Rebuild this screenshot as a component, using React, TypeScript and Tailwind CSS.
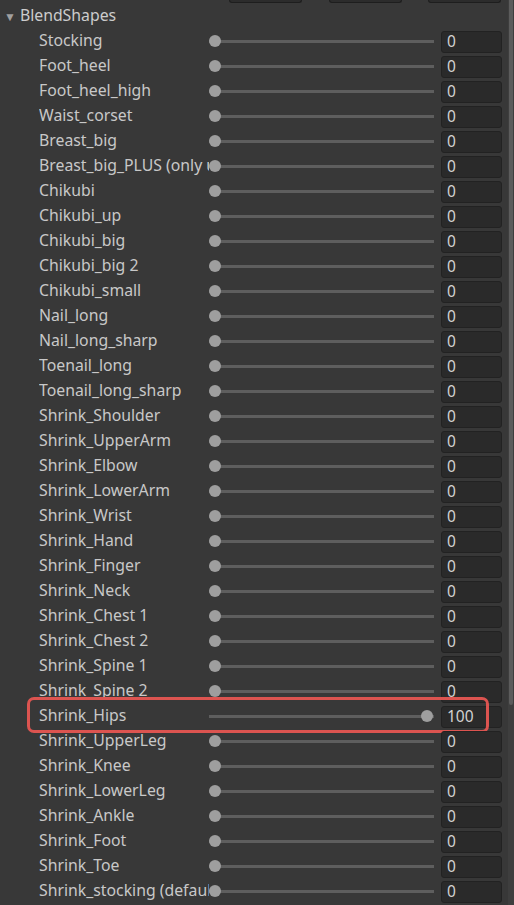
const shapes: { name: string; value: number }[] = [
  { name: 'Stocking', value: 0 },
  { name: 'Foot_heel', value: 0 },
  { name: 'Foot_heel_high', value: 0 },
  { name: 'Waist_corset', value: 0 },
  { name: 'Breast_big', value: 0 },
  { name: 'Breast_big_PLUS (only use with Breast_big)', value: 0 },
  { name: 'Chikubi', value: 0 },
  { name: 'Chikubi_up', value: 0 },
  { name: 'Chikubi_big', value: 0 },
  { name: 'Chikubi_big 2', value: 0 },
  { name: 'Chikubi_small', value: 0 },
  { name: 'Nail_long', value: 0 },
  { name: 'Nail_long_sharp', value: 0 },
  { name: 'Toenail_long', value: 0 },
  { name: 'Toenail_long_sharp', value: 0 },
  { name: 'Shrink_Shoulder', value: 0 },
  { name: 'Shrink_UpperArm', value: 0 },
  { name: 'Shrink_Elbow', value: 0 },
  { name: 'Shrink_LowerArm', value: 0 },
  { name: 'Shrink_Wrist', value: 0 },
  { name: 'Shrink_Hand', value: 0 },
  { name: 'Shrink_Finger', value: 0 },
  { name: 'Shrink_Neck', value: 0 },
  { name: 'Shrink_Chest 1', value: 0 },
  { name: 'Shrink_Chest 2', value: 0 },
  { name: 'Shrink_Spine 1', value: 0 },
  { name: 'Shrink_Spine 2', value: 0 },
  { name: 'Shrink_Hips', value: 100 },
  { name: 'Shrink_UpperLeg', value: 0 },
  { name: 'Shrink_Knee', value: 0 },
  { name: 'Shrink_LowerLeg', value: 0 },
  { name: 'Shrink_Ankle', value: 0 },
  { name: 'Shrink_Foot', value: 0 },
  { name: 'Shrink_Toe', value: 0 },
  { name: 'Shrink_stocking (default)', value: 0 },
];

function Slider({ value }: { value: number }) {
  return (
    <div className="relative h-[25px] w-[225px] shrink-0">
      <div className="absolute left-0 right-0 top-[11px] h-[3px] bg-[#5e5e5e]" />
      <div
        className="absolute top-[6px] h-[12px] w-[12px] rounded-full bg-[#9e9e9e]"
        style={{ left: `${(value / 100) * 212}px` }}
      />
    </div>
  );
}

function ShapeRow({ name, value }: { name: string; value: number }) {
  const active = value > 0;
  return (
    <div className="relative flex h-[25px] items-center pl-[39px]">
      <div className="w-[170px] shrink-0 overflow-hidden whitespace-nowrap pb-[2px] text-[15.8px] leading-[23px] text-[#c8c8c8]">
        {name}
      </div>
      <Slider value={value} />
      <div className="ml-[7px] flex h-[22px] w-[61px] shrink-0 items-center rounded-[3px] border border-[#222222] bg-[#2a2a2a] pl-[5px] text-[15.5px] text-[#d2d2d2]">
        {value}
      </div>
      {active && (
        <div className="absolute left-[27px] top-[-7px] h-[36px] w-[462px] rounded-[7px] border-[3px] border-[#dc5450]" />
      )}
    </div>
  );
}

export default function App() {
  return (
    <div
      className="flex h-[905px] w-[514px] overflow-hidden bg-[#383838]"
      style={{ fontFamily: '"Noto Sans", "Open Sans", sans-serif' }}
    >
      <div className="w-[508px] shrink-0">
        <div className="flex h-[4px] items-start">
          <div className="ml-[229px] h-[3px] w-[73px] rounded-b-[3px] border-x border-b border-[#1e1e1e] bg-[#2c2c2c]" />
          <div className="ml-[27px] h-[3px] w-[73px] rounded-b-[3px] border-x border-b border-[#1e1e1e] bg-[#2c2c2c]" />
          <div className="ml-[26px] h-[3px] w-[73px] rounded-b-[3px] border-x border-b border-[#1e1e1e] bg-[#2c2c2c]" />
        </div>
        <div className="flex h-[25px] items-center pl-[4px]">
          <span className="mr-[4px] text-[12px] leading-none text-[#a0a0a0]">▼</span>
          <span className="pb-[2px] text-[15.8px] text-[#cccccc]">BlendShapes</span>
        </div>
        {shapes.map((s) => (
          <ShapeRow key={s.name} name={s.name} value={s.value} />
        ))}
      </div>
      <div className="flex w-[6px] flex-col bg-[#3e3e3e]">
        <div className="mx-auto h-[705px] w-[4px] rounded-b-[2px] bg-[#5c5c5c]" />
      </div>
    </div>
  );
}
